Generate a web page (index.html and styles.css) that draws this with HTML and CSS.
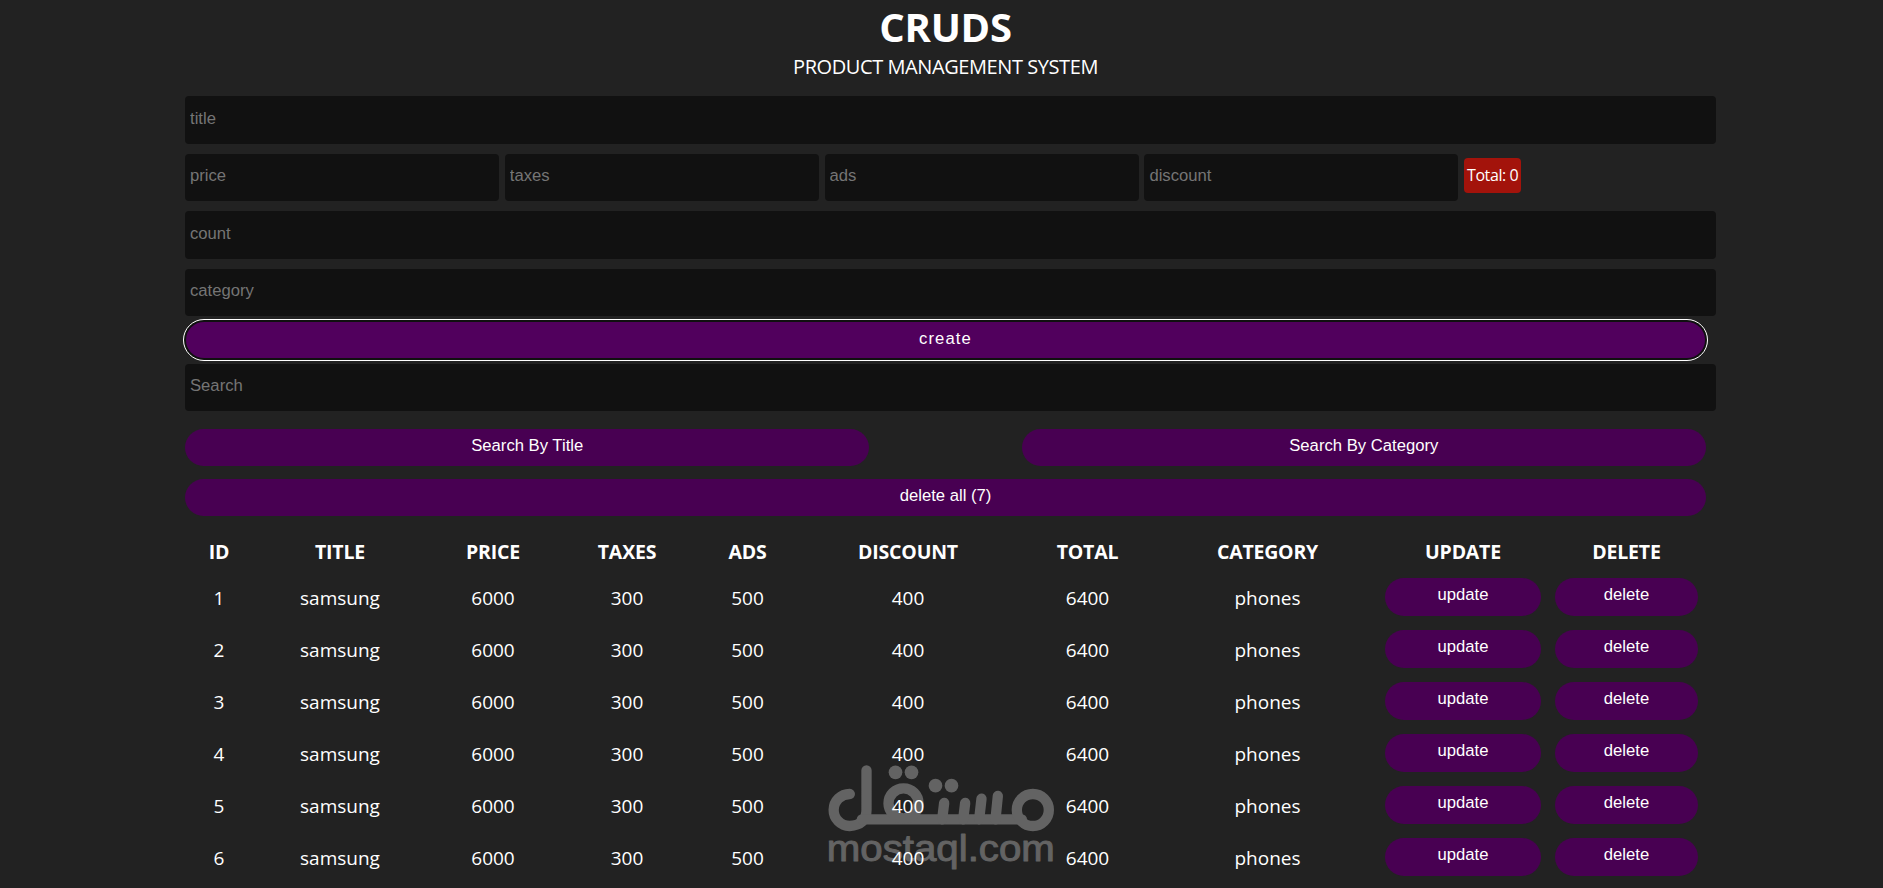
FILE: index.html
```
<!DOCTYPE html>
<html lang="en">
<head>
    <meta charset="UTF-8">
    <meta name="viewport" content="width=device-width, initial-scale=1.0">
    <title>CRUDS</title>
    <link rel="stylesheet" href="styles.css">
</head>
<body>
    <div class="cruds">
        <div class="head">
            <h1>CRUDS</h1>
            <p>PRODUCT MANAGEMENT SYSTEM</p>
        </div>

        <!-- inputs -->
        <div class="inputs">
            <input type="text" id="title" placeholder="title">
            <div class="price">
                <input type="number" id="price" placeholder="price">
                <input type="number" id="taxes" placeholder="taxes">
                <input type="number" id="ads" placeholder="ads">
                <input type="number" id="discount" placeholder="discount">
                <small id="total">Total: 0</small>
            </div>
            <input type="number" id="count" placeholder="count">
            <input type="text" id="category" placeholder="category">
            <button id="submit" class="create">create</button>
        </div>

        <!-- search -->
        <div class="search-block">
            <input type="text" id="search" placeholder="Search">
            <div class="btn-search">
                <button id="searchTitle">Search By Title</button>
                <button id="searchCategory">Search By Category</button>
            </div>
        </div>

        <button id="deleteAll" class="delete-all">delete all (7)</button>

        <table>
            <colgroup>
                <col class="c-id"><col class="c-title"><col class="c-price"><col class="c-taxes"><col class="c-ads">
                <col class="c-discount"><col class="c-total"><col class="c-category"><col class="c-update"><col class="c-delete">
            </colgroup>
            <thead>
                <tr>
                    <th>ID</th>
                    <th>TITLE</th>
                    <th>PRICE</th>
                    <th>TAXES</th>
                    <th>ADS</th>
                    <th>DISCOUNT</th>
                    <th>TOTAL</th>
                    <th>CATEGORY</th>
                    <th>UPDATE</th>
                    <th>DELETE</th>
                </tr>
            </thead>
            <tbody id="tbody"></tbody>
        </table>
    </div>

    <div class="watermark">
        <svg viewBox="84 78 680 318" width="227" height="106">
            <g fill="none" stroke="#636363" stroke-width="31" stroke-linecap="round">
                <path d="M149 165A48 48 0 1 0 148 261Q199 258 199 213V94"/>
                <path d="M185 241H665"/>
                <circle cx="310" cy="193" r="45"/>
                <circle cx="698" cy="213" r="48"/>
                <path d="M432 192L426 241M495 192L489 241M544 179L537 241M593 171L586 241"/>
            </g>
            <g fill="#636363">
                <circle cx="286" cy="100" r="20.5"/>
                <circle cx="334" cy="100" r="20.5"/>
                <circle cx="406" cy="140" r="20.5"/>
                <circle cx="454" cy="140" r="20.5"/>
            </g>
            <text x="80" y="366" textLength="684" lengthAdjust="spacingAndGlyphs">mostaql.com</text>
        </svg>
    </div>

    <script>
        let products = [];
        for (let i = 0; i < 6; i++) {
            products.push({ title: 'samsung', price: 6000, taxes: 300, ads: 500, discount: 400, total: 6400, category: 'phones' });
        }

        // show data
        function showData() {
            document.getElementById('tbody').innerHTML = products.map((p, i) => `
                <tr>
                    <td>${i + 1}</td>
                    <td>${p.title}</td>
                    <td>${p.price}</td>
                    <td>${p.taxes}</td>
                    <td>${p.ads}</td>
                    <td>${p.discount}</td>
                    <td>${p.total}</td>
                    <td>${p.category}</td>
                    <td><button>update</button></td>
                    <td><button>delete</button></td>
                </tr>
            `).join('');
        }

        showData();
    </script>
</body>
</html>
```
FILE: styles.css
```
* {
    box-sizing: border-box;
    margin: 0;
    padding: 0;
}

body {
    position: relative;
    height: 888px;
    overflow: hidden;
    background: #222;
    color: #fff;
    font-family: "Open Sans", "Noto Sans", sans-serif;
    font-size: 19px;
}

.cruds {
    position: relative;
    z-index: 1;
    width: 1521px;
    margin-left: 185px;
}

.head {
    height: 96px;
    text-align: center;
    text-transform: uppercase;
}

h1 {
    font-size: 40px;
    line-height: 54px;
    letter-spacing: -0.3px;
}

.head p {
    font-size: 20px;
    line-height: 26px;
    letter-spacing: -0.42px;
}

input {
    display: block;
    width: 1531px;
    height: 48px;
    padding: 0 5px 3px;
    border: none;
    outline: none;
    border-radius: 4px;
    background: #111;
    color: #fff;
    font-family: "Liberation Sans", sans-serif;
    font-size: 16.67px;
}

input::placeholder {
    color: #757575;
}

.price {
    display: flex;
    align-items: flex-start;
    gap: 5.8px;
    margin: 10px 0;
}

.price input {
    width: 314px;
    height: 47px;
}

#total {
    width: 57px;
    height: 35px;
    margin-top: 4px;
    border-radius: 4px;
    background: #a3130b;
    font-size: 16px;
    line-height: 35px;
    letter-spacing: -0.4px;
    text-align: center;
    white-space: nowrap;
}

#category {
    height: 47px;
    margin-top: 10px;
}

button {
    display: block;
    width: 100%;
    height: 37px;
    padding-bottom: 4px;
    border: none;
    border-radius: 20px;
    background: #480052;
    color: #fff;
    font-family: "Liberation Sans", sans-serif;
    font-size: 16.67px;
    cursor: pointer;
}

.create {
    width: 1519px;
    height: 36px;
    margin: 6px 1px;
    padding-bottom: 3px;
    background: #51005d;
    letter-spacing: 1.1px;
    outline: 1px solid #fff;
    outline-offset: 2px;
    box-shadow: 0 0 0 2px #101010;
}

#search {
    height: 47px;
}

.btn-search {
    display: flex;
    justify-content: space-between;
    margin: 18px 0 13px;
}

.btn-search button {
    width: 45%;
}

table {
    width: 1518px;
    margin: 14px 0 0 2px;
    table-layout: fixed;
    border-collapse: collapse;
    text-align: center;
}

th {
    height: 42px;
    font-size: 19.5px;
    text-transform: uppercase;
    letter-spacing: -0.2px;
}

td {
    height: 52px;
    padding: 0 7px;
}

td button {
    height: 38px;
    margin-bottom: 3px;
}

.c-id { width: 64px; }
.c-title { width: 178px; }
.c-price { width: 128px; }
.c-taxes { width: 140px; }
.c-ads { width: 101px; }
.c-discount { width: 220px; }
.c-total { width: 139px; }
.c-category { width: 221px; }
.c-update { width: 170px; }
.c-delete { width: 157px; }

.watermark {
    position: absolute;
    left: 828px;
    top: 765px;
}

.watermark svg {
    display: block;
}

.watermark text {
    font-family: "Liberation Sans", sans-serif;
    font-size: 108px;
    fill: #636363;
    stroke: #636363;
    stroke-width: 3;
    stroke-linejoin: round;
}
```
